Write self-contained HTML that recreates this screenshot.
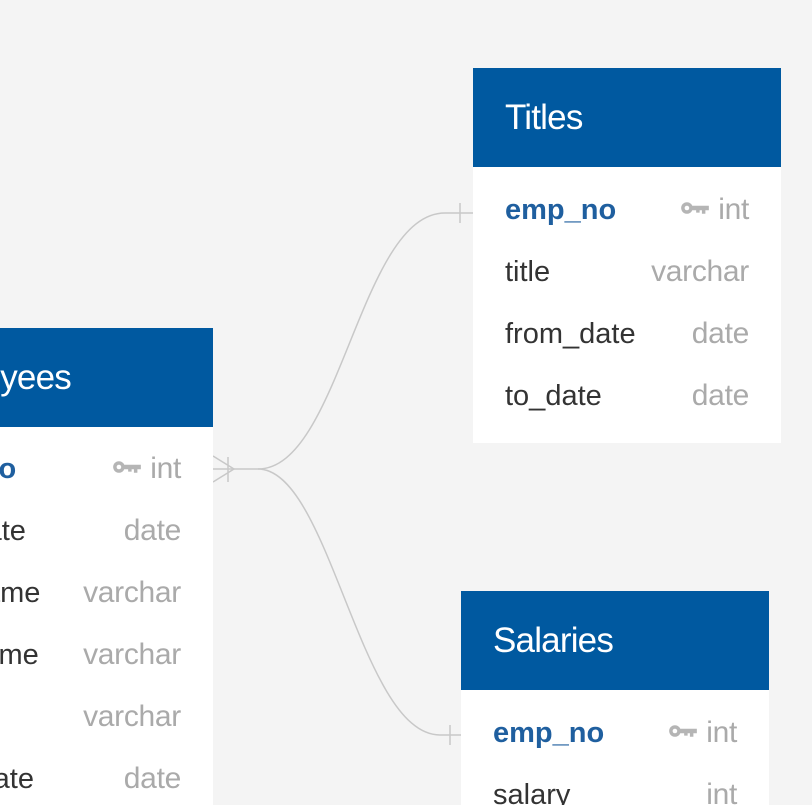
<!DOCTYPE html>
<html><head><style>
body{margin:0;width:812px;height:805px;overflow:hidden;background:#f4f4f4;font-family:"Liberation Sans",Arial,sans-serif;position:relative}
.t{position:absolute;background:#fff;overflow:hidden}
.h{background:#0059a0;color:#fff;height:99px;font-size:35px;line-height:99px;padding-left:32px;letter-spacing:-0.8px;white-space:nowrap}
.r{position:relative;height:62px;line-height:62px;font-size:29px;color:#333;padding-left:32px;white-space:nowrap}
.r .ty{position:absolute;right:32px;top:0;color:#aaa;font-size:30px;letter-spacing:-0.3px}
.pk{color:#1f5f9f;font-weight:bold}
.k{display:inline-block;vertical-align:middle;margin-right:8px;margin-top:-6px}
</style></head><body>
<svg width="812" height="805" style="position:absolute;left:0;top:0">
<g stroke="#c8c8c8" stroke-width="1.5" fill="none">
<path d="M213 469 H258"/>
<path d="M228 457 V482"/>
<path d="M213 456 L234 469 L213 482"/>
<path d="M258 469 C340 469 360 213 445 213 H473"/>
<path d="M460 203 V223"/>
<path d="M258 469 C330 469 360 735 440 735 H461"/>
<path d="M450 725 V745"/>
</g></svg>

<div class="t" style="left:-127px;top:328px;width:340px;height:477px">
<div class="h">Employees</div>
<div style="padding-top:11px">
<div class="r"><span class="pk">emp_no</span><span class="ty"><svg class="k" width="30" height="14" viewBox="0 0 26 12"><circle cx="6" cy="6" r="5" fill="#b5b5b5"/><circle cx="6" cy="6" r="2" fill="#fff"/><path d="M10 4h15v4h-3v3h-3v-3h-2v2h-3v-2h-4z" fill="#b5b5b5"/></svg>int</span></div>
<div class="r">hire_date<span class="ty">date</span></div>
<div class="r">first_name<span class="ty">varchar</span></div>
<div class="r">last_name<span class="ty">varchar</span></div>
<div class="r">sex<span class="ty">varchar</span></div>
<div class="r">birth_date<span class="ty">date</span></div>
</div></div>

<div class="t" style="left:473px;top:68px;width:308px;height:375px">
<div class="h">Titles</div>
<div style="padding-top:12px">
<div class="r"><span class="pk">emp_no</span><span class="ty"><svg class="k" width="30" height="14" viewBox="0 0 26 12"><circle cx="6" cy="6" r="5" fill="#b5b5b5"/><circle cx="6" cy="6" r="2" fill="#fff"/><path d="M10 4h15v4h-3v3h-3v-3h-2v2h-3v-2h-4z" fill="#b5b5b5"/></svg>int</span></div>
<div class="r">title<span class="ty">varchar</span></div>
<div class="r">from_date<span class="ty">date</span></div>
<div class="r">to_date<span class="ty">date</span></div>
</div></div>

<div class="t" style="left:461px;top:591px;width:308px;height:214px">
<div class="h">Salaries</div>
<div style="padding-top:12px">
<div class="r"><span class="pk">emp_no</span><span class="ty"><svg class="k" width="30" height="14" viewBox="0 0 26 12"><circle cx="6" cy="6" r="5" fill="#b5b5b5"/><circle cx="6" cy="6" r="2" fill="#fff"/><path d="M10 4h15v4h-3v3h-3v-3h-2v2h-3v-2h-4z" fill="#b5b5b5"/></svg>int</span></div>
<div class="r">salary<span class="ty">int</span></div>
</div></div>
</body></html>
